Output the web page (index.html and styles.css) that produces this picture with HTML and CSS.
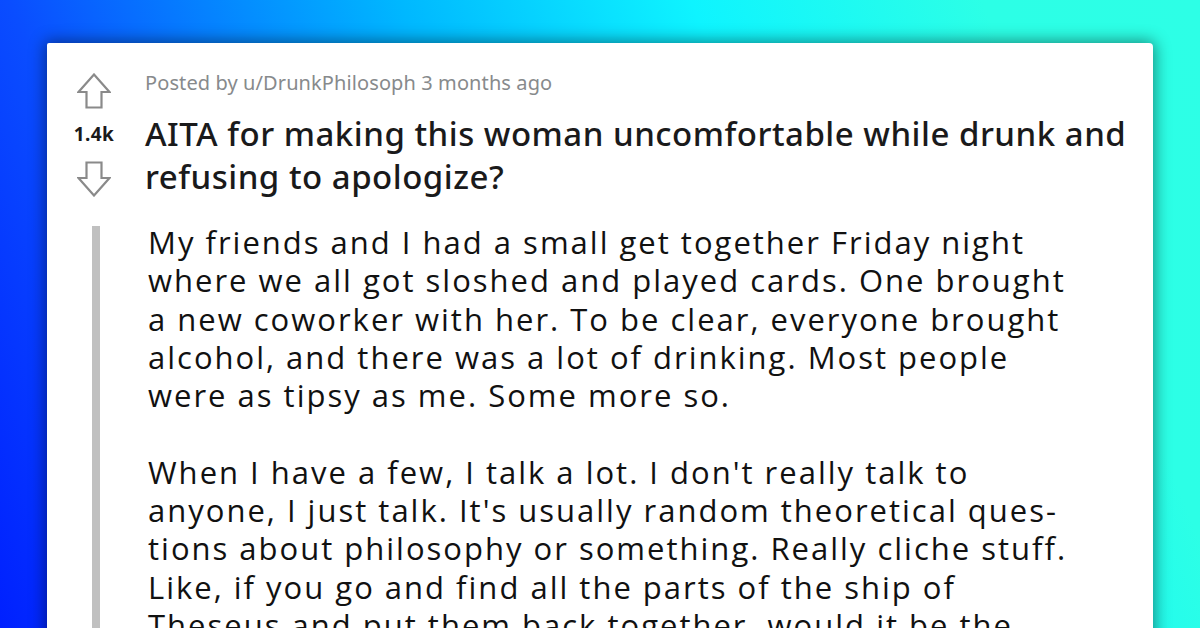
FILE: index.html
```html
<!DOCTYPE html>
<html lang="en">
<head>
<meta charset="utf-8">
<title>AITA post</title>
<link rel="stylesheet" href="styles.css">
</head>
<body>
<div class="page">
  <article class="card">
    <header class="post-head">
      <div class="votes">
        <svg class="arrow" width="34" height="36" viewBox="0 0 34 36" aria-hidden="true">
          <path d="M17 1.5 L32.5 19 H24.5 V34.5 H9.5 V19 H1.5 Z" fill="none" stroke="#8a8a8a" stroke-width="2.2" stroke-linejoin="miter"/>
        </svg>
        <div class="score">1.4k</div>
        <svg class="arrow" width="34" height="36" viewBox="0 0 34 36" aria-hidden="true">
          <path d="M17 34.5 L32.5 17 H24.5 V1.5 H9.5 V17 H1.5 Z" fill="none" stroke="#8a8a8a" stroke-width="2.2" stroke-linejoin="miter"/>
        </svg>
      </div>
      <div class="head-main">
        <div class="meta">Posted by u/DrunkPhilosoph 3 months ago</div>
        <h1 class="title">AITA for making this woman uncomfortable while drunk and<br>refusing to apologize?</h1>
      </div>
    </header>
    <section class="post-body">
      <p>My friends and I had a small get together Friday night<br>where we all got sloshed and played cards. One brought<br>a new coworker with her. To be clear, everyone brought<br>alcohol, and there was a lot of drinking. Most people<br>were as tipsy as me. Some more so.</p>
      <p>When I have a few, I talk a lot. I don't really talk to<br>anyone, I just talk. It's usually random theoretical ques-<br>tions about philosophy or something. Really cliche stuff.<br>Like, if you go and find all the parts of the ship of<br>Theseus and put them back together, would it be the</p>
    </section>
  </article>
</div>
</body>
</html>
```

FILE: styles.css
```css
html, body {
  margin: 0;
  padding: 0;
}

body {
  width: 1200px;
  height: 628px;
  overflow: hidden;
  background: linear-gradient(68deg, #0020ff 0%, #0a4dff 18%, #00b8ff 45%, #0ef4ff 65%, #2cffe6 85%, #2dffe6 100%);
}

.page {
  padding: 43px 47px 0 47px;
}

.card {
  background: #ffffff;
  height: 640px;
  box-shadow: 0 0 16px 2px rgba(0, 0, 0, 0.45);
  border-radius: 2px 4px 0 0;
}

.post-head {
  display: flex;
  padding-top: 30px;
}

.votes {
  width: 46px;
  margin-left: 24px;
  display: flex;
  flex-direction: column;
  align-items: center;
}

.arrow {
  display: block;
}

.score {
  font-family: "Noto Sans", sans-serif;
  font-weight: 700;
  font-size: 19px;
  line-height: 22px;
  letter-spacing: 0.4px;
  color: #1a1a1b;
  margin: 14px 0 16px;
}

.head-main {
  margin-left: 28px;
}

.meta {
  font-family: "Noto Sans", sans-serif;
  font-size: 20px;
  line-height: 24px;
  letter-spacing: 0.1px;
  color: #878a8c;
  margin-top: -2px;
}

.title {
  margin: 17px 0 0;
  font-family: "Noto Sans", sans-serif;
  font-weight: 500;
  font-size: 33px;
  line-height: 43px;
  letter-spacing: 0.5px;
  color: #1a1a1b;
}

.post-body {
  margin: 28px 0 0 45px;
  border-left: 8px solid #c0c0c0;
  padding-left: 48px;
  height: 420px;
}

.post-body p {
  margin: 0 0 38.3px;
  font-family: "Open Sans", sans-serif;
  font-size: 31px;
  line-height: 38.3px;
  letter-spacing: 2px;
  color: #111111;
  white-space: nowrap;
  position: relative;
  top: -3px;
}
```
